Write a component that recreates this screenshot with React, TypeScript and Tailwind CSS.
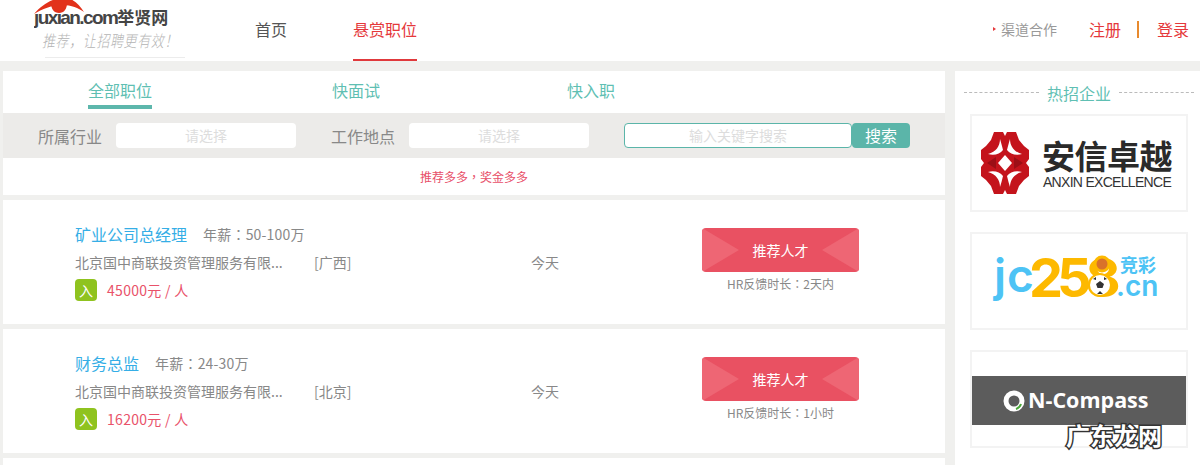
import * as React from "react";

interface Job {
    title: string;
    salary: string;
    company: string;
    city: string;
    bounty: string;
    feedback: string;
}

const jobs: Job[] = [
    {title: '矿业公司总经理', salary: '50-100万', company: '北京国中商联投资管理服务有限...', city: '[广西]', bounty: '45000元 / 人', feedback: '2天内'},
    {title: '财务总监', salary: '24-30万', company: '北京国中商联投资管理服务有限...', city: '[北京]', bounty: '16200元 / 人', feedback: '1小时'},
];

// fullwidth punctuation sits centred in the TC cut, like the reference
function Punct({children}: {children: string}) {
    return <span className="font-['Noto_Sans_CJK_TC',sans-serif]">{children}</span>;
}

function Logo() {
    return (
        <div className="relative w-[152px] h-[61px] ml-[34px] shrink-0 overflow-hidden">
            <div className="absolute left-0 top-[6px] whitespace-nowrap text-[19px] leading-[24px] font-bold text-[#444] tracking-[-1.6px] font-['Liberation_Sans','Noto_Sans_CJK_SC',sans-serif]">
                juxian.com<span className="text-[17px] tracking-[0px]">举贤网</span>
            </div>
            <svg className="absolute left-0 top-0" width="60" height="20" viewBox="0 0 60 20">
                {/* the eye crops the tops of the letters below it */}
                <rect x="0" y="0" width="52" height="14" fill="#fff" />
                <path d="M0 14 C6 7 14 1 22 -1 L36 -1 C42 1 46 6 50 12 C44 8 38 5 28 5 C18 5 8 9 0 14 Z" fill="#e2321b" />
                <path d="M17 3 L33 3 C33 9 30 13 25 13 C20 13 17 9 17 3 Z" fill="#e2321b" />
            </svg>
            <div className="absolute left-[8px] top-[31px] origin-top-left scale-y-125 whitespace-nowrap text-[13px] leading-[16px] italic text-[#b4b4b4] tracking-[0.6px] font-['Noto_Sans_CJK_SC',sans-serif] font-light">
                推荐，让招聘更有效！
            </div>
            <div className="absolute left-[11px] bottom-[3px] w-[140px] h-px bg-[#ececec]" />
        </div>
    );
}

function Header() {
    return (
        <div className="h-[61px] bg-white flex items-stretch">
            <Logo />
            <div className="flex ml-[69px] text-[16px] text-[#555]">
                <a className="leading-[58px]">首页</a>
                <a className="ml-[66px] h-[61px] leading-[58px] text-[#e5383b] border-b-2 border-[#e0393c]">悬赏职位</a>
            </div>
            <div className="ml-auto flex items-center h-[58px] pr-[11px]">
                <span className="w-0 h-0 border-y-[2px] border-y-transparent border-l-[3px] border-l-[#e5383b] mr-[5px]" />
                <span className="text-[14px] text-[#999]">渠道合作</span>
                <span className="ml-[32px] text-[16px] text-[#e5383b] w-[32px] whitespace-nowrap">注册</span>
                <span className="ml-[16px] w-[2px] h-[17px] bg-[#e88a2e]" />
                <span className="ml-[18px] text-[16px] text-[#e5383b] w-[32px] whitespace-nowrap">登录</span>
            </div>
        </div>
    );
}

function Filters() {
    return (
        <div className="h-[45px] bg-[#ecebe9] flex items-center text-[16px] text-[#888]">
            <span className="ml-[35px] w-[64px]">所属行业</span>
            <div className="ml-[14px] w-[180px] h-[25px] bg-white rounded-[4px] text-center text-[14px] leading-[25px] text-[#ddd]">请选择</div>
            <span className="ml-[35px] w-[64px]">工作地点</span>
            <div className="ml-[14px] w-[180px] h-[25px] bg-white rounded-[4px] text-center text-[14px] leading-[25px] text-[#ddd]">请选择</div>
            <div className="ml-[35px] w-[228px] h-[25px] bg-white border border-[#5bb5a9] rounded-[4px] pl-[64px] text-[14px] leading-[23px] text-[#ddd]">输入关键字搜索</div>
            <button className="w-[58px] h-[25px] bg-[#5bb5a9] rounded-[4px] text-white text-[16px] leading-[25px]">搜索</button>
        </div>
    );
}

function RecommendButton() {
    return (
        <div className="relative w-[157px] h-[44px] bg-[#e95162] rounded-[4px] overflow-hidden flex items-center justify-center">
            <svg className="absolute inset-0" width="157" height="44" viewBox="0 0 157 44">
                <polygon points="0,0 37,22 0,44" fill="#ee6674" />
                <polygon points="157,0 120,22 157,44" fill="#ee6674" />
            </svg>
            <span className="relative text-white text-[14px]">推荐人才</span>
        </div>
    );
}

function JobCard({job}: {job: Job}) {
    return (
        <div className="h-[124px] bg-white flex mt-[5px]">
            <div className="w-[528px] pl-[72px] pt-[22px]">
                <div className="flex items-center h-[24px]">
                    <span className="text-[16px] text-[#35aee6]">{job.title}</span>
                    <span className="ml-[16px] text-[14px] tracking-[0.2px] text-[#888]">年薪<Punct>：</Punct>{job.salary}</span>
                </div>
                <div className="flex items-center h-[24px] mt-[4px] text-[14px] text-[#888]">
                    <span className="w-[239px] whitespace-nowrap">{job.company}</span>
                    <span>{job.city}</span>
                </div>
                <div className="flex items-center mt-[5px]">
                    <span className="w-[22px] h-[22px] rounded-[4px] bg-[#8fc31f] text-white text-[14px] leading-[22px] text-center">入</span>
                    <span className="ml-[10px] text-[14px] tracking-[0.3px] text-[#e9526a]">{job.bounty}</span>
                </div>
            </div>
            <div className="w-[171px] pt-[50px] text-[14px] leading-[24px] text-[#888]">今天</div>
            <div className="pt-[28px]">
                <RecommendButton />
                <div className="mt-[4px] text-center text-[12px] leading-[16px] text-[#888]">HR反馈时长<Punct>：</Punct>{job.feedback}</div>
            </div>
        </div>
    );
}

function AnxinLogo() {
    return (
        <div className="h-full flex items-center pl-[7px]">
            <svg width="52" height="64" viewBox="0 0 52 64">
                <path d="M15 1 L24 1 L26 5 L28 1 L37 1 L40 9 L45 15 L50 19 L50 28 L47 32 L50 36 L50 45 L45 49 L40 55 L37 63 L28 63 L26 59 L24 63 L15 63 L12 55 L7 49 L2 45 L2 36 L5 32 L2 28 L2 19 L7 15 L12 9 Z" fill="#c4141c" />
                <path d="M26 24 L33 32 L26 40 L19 32 Z" fill="#fff" />
                <path d="M21 8 C21 15 17 21 9 23 C15 25 21 23 24 19 C23 15 22 11 21 8 Z M31 8 C31 15 35 21 43 23 C37 25 31 23 28 19 C29 15 30 11 31 8 Z M21 56 C21 49 17 43 9 41 C15 39 21 41 24 45 C23 49 22 53 21 56 Z M31 56 C31 49 35 43 43 41 C37 39 31 41 28 45 C29 49 30 53 31 56 Z" fill="#fff" />
                <path d="M8 32 L17 26 L17 38 Z M44 32 L35 26 L35 38 Z" fill="#9c0f16" />
            </svg>
            <div className="ml-[11px] flex flex-col items-center">
                <div className="text-[33px] leading-[38px] font-bold text-[#2a2a2a] whitespace-nowrap tracking-[-0.5px]">安信卓越</div>
                <div className="text-[14px] leading-[16px] tracking-[-0.7px] text-[#333] whitespace-nowrap font-['Liberation_Sans',sans-serif]">ANXIN EXCELLENCE</div>
            </div>
        </div>
    );
}

function Jc258Logo() {
    return (
        <svg width="214" height="94" viewBox="0 0 214 94" className="block">
            <g fontFamily="Inter, 'Liberation Sans', sans-serif">
                <text x="22" y="58" fontSize="46" fontWeight="600" letterSpacing="1" fill="#4dc3f5">jc</text>
                <text x="57" y="63" fontSize="54" fontWeight="700" letterSpacing="-6" fill="#fdb900">258</text>
                <text x="144" y="62" fontSize="28" fontWeight="600" fill="#4dc3f5">.cn</text>
            </g>
            <text x="148" y="38" fontSize="18" fontWeight="700" fontFamily="'Noto Sans CJK SC', sans-serif" fill="#4dc3f5">竞彩</text>
            <circle cx="130" cy="30" r="8.5" fill="#fdb900" />
            <circle cx="130" cy="30" r="5.5" fill="#d9722a" />
            <circle cx="128" cy="51" r="12" fill="#fdb900" />
            <circle cx="128" cy="51" r="10" fill="#fff" />
            <path d="M128 47 L132 50 L130.5 54 L125.5 54 L124 50 Z M121 45 L124 43 L124 46 Z M135 45 L132 43 L132 46 Z M125 60 L131 60 L128 57 Z" fill="#333" />
        </svg>
    );
}

function NCompassLogo() {
    return (
        <div className="h-full flex items-center">
            <div className="w-full h-[49px] bg-[#5c5c5c] flex items-center pl-[31px] mt-[3px]">
                <svg width="22" height="22" viewBox="0 0 22 22">
                    <circle cx="11" cy="11" r="8" fill="none" stroke="#fff" strokeWidth="5" />
                    <path d="M18 14 A8 8 0 0 1 13 19" fill="none" stroke="#4aa83a" strokeWidth="2" />
                </svg>
                <span className="ml-[3px] text-[21.5px] font-bold text-white font-['Open_Sans',sans-serif] whitespace-nowrap">N-Compass</span>
            </div>
        </div>
    );
}

function Sidebar() {
    return (
        <div className="w-[245px] ml-[10px] bg-white shrink-0 h-[394px]">
            <div className="flex items-center h-[43px] pl-[9px] pr-[6px]">
                <div className="flex-1 border-t border-dashed border-[#bbb]" />
                <span className="mx-[8px] text-[16px] text-[#5fbfb3]">热招企业</span>
                <div className="flex-1 border-t border-dashed border-[#bbb]" />
            </div>
            <div className="ml-[15px] w-[218px] flex flex-col gap-[20px]">
                <div className="h-[98px] border-2 border-[#f3f3f3]"><AnxinLogo /></div>
                <div className="h-[98px] border-2 border-[#f3f3f3]"><Jc258Logo /></div>
                <div className="h-[98px] border-2 border-[#f3f3f3]"><NCompassLogo /></div>
            </div>
        </div>
    );
}

export default function App() {
    return (
        <div className="relative w-[1200px] h-[465px] overflow-hidden bg-[#f0f0ee] font-['Noto_Sans_CJK_SC',sans-serif]">
            <Header />
            <div className="flex pt-[10px] pl-[3px]">
                <div className="w-[942px] shrink-0">
                    <div className="h-[42px] bg-white flex text-[16px] text-[#5fbfb3]">
                        <a className="ml-[85px] w-[64px] h-[34px] leading-[39px] border-b-4 border-[#5db7ac] box-content whitespace-nowrap">全部职位</a>
                        <a className="ml-[180px] leading-[39px]">快面试</a>
                        <a className="ml-[187px] leading-[39px]">快入职</a>
                    </div>
                    <Filters />
                    <div className="h-[37px] bg-white text-center text-[12px] leading-[37px] text-[#e8506a]">推荐多多<Punct>，</Punct>奖金多多</div>
                    {jobs.map((job) => (
                        <JobCard key={job.title} job={job} />
                    ))}
                    <div className="h-[20px] bg-white mt-[5px]" />
                </div>
                <Sidebar />
            </div>
            {/* site watermark sits over the last logo */}
            <svg className="absolute left-[1060px] top-[418px]" width="110" height="36" viewBox="0 0 110 36">
                <text x="6" y="27" fontSize="24" fontWeight="700" fontFamily="'Noto Sans CJK SC', sans-serif" fill="#fff" stroke="#333" strokeWidth="3" paintOrder="stroke">广东龙网</text>
            </svg>
        </div>
    );
}
